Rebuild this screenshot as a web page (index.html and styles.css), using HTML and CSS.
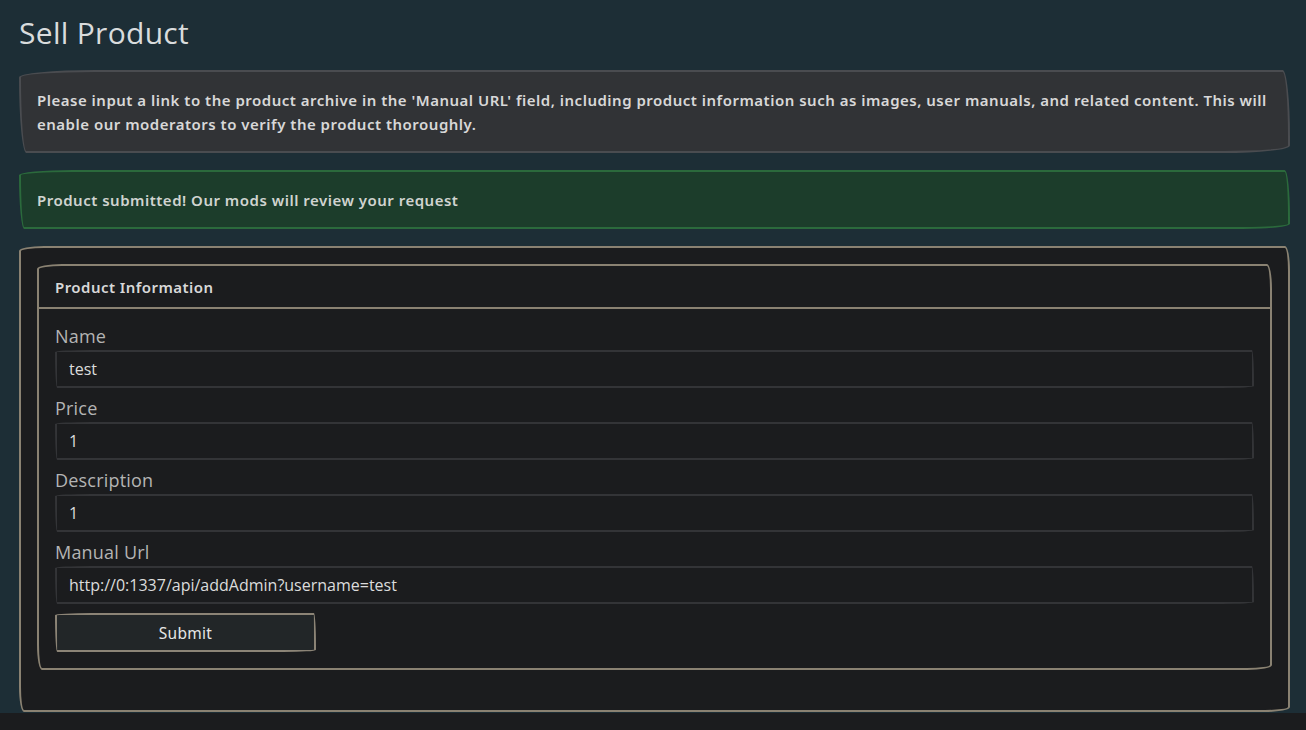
FILE: index.html
```html
<!DOCTYPE html>
<html lang="en">
<head>
  <meta charset="UTF-8" />
  <meta name="viewport" content="width=device-width, initial-scale=1.0" />
  <title>Sell Product</title>
  <link rel="stylesheet" href="styles.css">
</head>
<body>
  <div class="page">
    <h1>Sell Product</h1>
    <div class="alert alert-info">
      Please input a link to the product archive in the 'Manual URL' field, including product information such as images, user manuals, and related content. This will enable our moderators to verify the product thoroughly.
    </div>
    <div class="alert alert-success">Product submitted! Our mods will review your request</div>
    <div class="card outer">
      <form class="card inner">
        <div class="card-header">Product Information</div>
        <div class="card-body">
          <label for="name">Name</label>
          <input type="text" id="name" value="test" />
          <label for="price">Price</label>
          <input type="text" id="price" value="1" />
          <label for="description">Description</label>
          <input type="text" id="description" value="1" />
          <label for="manual">Manual Url</label>
          <input type="text" id="manual" value="http://0:1337/api/addAdmin?username=test" />
          <button type="button">Submit</button>
        </div>
      </form>
    </div>
  </div>
</body>
</html>
```

FILE: styles.css
```css
html, body {
  margin: 0;
  background-color: #1b1c1e;
}
body {
  font-family: "Noto Sans", "Liberation Sans", sans-serif;
  color: #d4d4d4;
}
.page {
  background-color: #1d2e36;
  padding: 14px 16px 1px 19px;
}
h1 {
  margin: 0 0 18px;
  font-family: "Open Sans", sans-serif;
  font-weight: 400;
  font-size: 30px;
  line-height: 38px;
  color: #d9dcdd;
  letter-spacing: 0.3px;
}
.alert {
  border: 2px solid;
  border-radius: 255px 25px 225px 25px / 25px 225px 25px 255px;
  padding: 16px 16px 15px;
  font-size: 15px;
  font-weight: 600;
  line-height: 24px;
  letter-spacing: 0.5px;
  margin-bottom: 17px;
}
.alert-info {
  background-color: #313336;
  border-color: #4a4c50;
  color: #d8d8d8;
}
.alert-success {
  background-color: #1c3d2b;
  border-color: #2b6a3c;
  color: #d0d4d0;
}
.card {
  border: 2px solid #8a8272;
  border-radius: 25px 5px 25px 5px / 5px 25px 5px 25px;
  background-color: #1b1c1e;
}
.outer {
  padding: 16px 16px 40px;
}
.inner {
  display: block;
  margin: 0;
}
.card-header {
  padding: 11px 16px 10px;
  border-bottom: 2px solid #8a8272;
  font-size: 15px;
  font-weight: 600;
  line-height: 20px;
  letter-spacing: 0.45px;
  color: #d8d8d8;
}
.card-body {
  display: flex;
  flex-direction: column;
  align-items: flex-start;
  padding: 15px 16px 16px;
}
label {
  font-family: "Open Sans", sans-serif;
  font-size: 18px;
  line-height: 24px;
  letter-spacing: 0.2px;
  color: #b4b4b4;
}
input {
  box-sizing: border-box;
  width: 100%;
  height: 38px;
  margin: 2px 0 8px;
  padding: 0 12px;
  border: 2px solid #333437;
  border-radius: 255px 15px 225px 15px / 15px 225px 15px 255px;
  background-color: #1b1c1e;
  color: #dcdcdc;
  font-family: "Open Sans", sans-serif;
  font-size: 16px;
  letter-spacing: 0;
}
input:focus {
  outline: none;
}
button {
  width: 261px;
  height: 39px;
  margin-top: 1px;
  border: 2px solid #8c8476;
  border-radius: 255px 15px 225px 15px / 15px 225px 15px 255px;
  background-color: #222628;
  color: #e6e6e6;
  font-family: "Noto Sans", sans-serif;
  font-size: 15.5px;
  letter-spacing: 0.3px;
  cursor: pointer;
}
```
